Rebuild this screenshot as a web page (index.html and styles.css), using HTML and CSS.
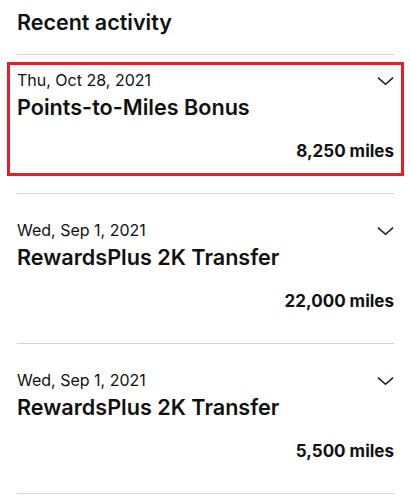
FILE: index.html
```html
<!DOCTYPE html>
<html lang="en">
<head>
    <meta charset="UTF-8">
    <meta name="viewport" content="width=device-width, initial-scale=1.0">
    <title>Recent activity</title>
    <link rel="stylesheet" href="styles.css">
</head>
<body>
    <div class="container">
        <h1 class="section-title">Recent activity</h1>

        <div class="activity activity-first">
            <div class="activity-card highlight">
                <div class="activity-top">
                    <span class="activity-date">Thu, Oct 28, 2021</span>
                    <svg class="chevron" viewBox="0 0 18 10" width="17" height="10"><path d="M1 1.5 L9 8.5 L17 1.5" /></svg>
                </div>
                <div class="activity-name">Points-to-Miles Bonus</div>
                <div class="activity-miles">8,250 miles</div>
            </div>
        </div>

        <div class="activity">
            <div class="activity-card">
                <div class="activity-top">
                    <span class="activity-date">Wed, Sep 1, 2021</span>
                    <svg class="chevron" viewBox="0 0 18 10" width="17" height="10"><path d="M1 1.5 L9 8.5 L17 1.5" /></svg>
                </div>
                <div class="activity-name">RewardsPlus 2K Transfer</div>
                <div class="activity-miles">22,000 miles</div>
            </div>
        </div>

        <div class="activity">
            <div class="activity-card">
                <div class="activity-top">
                    <span class="activity-date">Wed, Sep 1, 2021</span>
                    <svg class="chevron" viewBox="0 0 18 10" width="17" height="10"><path d="M1 1.5 L9 8.5 L17 1.5" /></svg>
                </div>
                <div class="activity-name">RewardsPlus 2K Transfer</div>
                <div class="activity-miles">5,500 miles</div>
            </div>
        </div>
    </div>
</body>
</html>
```

FILE: styles.css
```css
body {
    font-family: Inter, "Liberation Sans", Arial, sans-serif;
    margin: 0;
    padding: 0;
    background-color: #fff;
    color: #111;
}
.container {
    padding: 0 17px;
}
.section-title {
    margin: 0;
    padding: 9px 0 18px;
    font-size: 21.5px;
    line-height: 27px;
    font-weight: 600;
    border-bottom: 1px solid #d4d4d4;
}
.activity {
    padding: 26px 0 32px;
    border-bottom: 1px solid #d4d4d4;
}
.activity-first {
    padding: 7px 0 17px;
}
.activity-card.highlight {
    margin: 0 -10px;
    padding: 5px 7px 12px;
    border: 3px solid #e3202c;
}
.activity-top {
    display: flex;
    justify-content: space-between;
    align-items: center;
}
.activity-date {
    font-size: 16px;
    line-height: 21px;
}
.chevron {
    fill: none;
    stroke: #1c1f3a;
    stroke-width: 1.7;
}
.activity-name {
    margin-top: 3px;
    font-size: 21.6px;
    line-height: 27px;
    font-weight: 600;
}
.activity-miles {
    margin-top: 20px;
    font-size: 17px;
    line-height: 20px;
    font-weight: 700;
    text-align: right;
}
```
